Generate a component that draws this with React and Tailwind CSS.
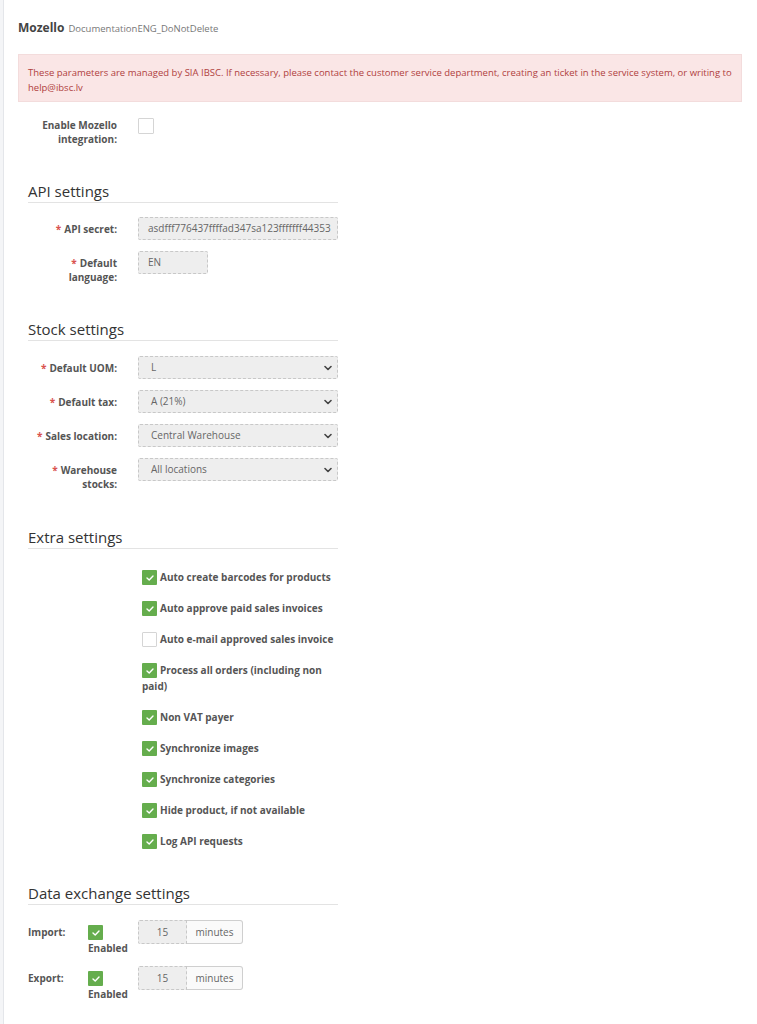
const font = { fontFamily: '"Open Sans", "Liberation Sans", sans-serif' }

const Req = () => <span className="text-[#d9534f] mr-[3px]">*</span>

const Label = ({ children, required }) => (
  <div className="w-[89px] pl-[4px] pt-[5px] text-right font-bold text-[10px] leading-[14px] text-[#555]">
    {required && <Req />}
    {children}
  </div>
)

const Chevron = () => (
  <svg width="8" height="6" viewBox="0 0 8 6" className="shrink-0">
    <polyline points="1,1.5 4,4.5 7,1.5" fill="none" stroke="#444" strokeWidth="1.6" strokeLinecap="round" strokeLinejoin="round" />
  </svg>
)

const Check = ({ size = 15, className = '' }) => (
  <span
    className={`flex items-center justify-center bg-[#65ad4d] rounded-[1px] ${className}`}
    style={{ width: size, height: size }}
  >
    <svg width="8" height="6" viewBox="0 0 8 6">
      <polyline points="1,3 3.2,5 7,1" fill="none" stroke="#fff" strokeWidth="1.4" strokeLinecap="round" strokeLinejoin="round" />
    </svg>
  </span>
)

const Empty = ({ size = 15, className = '' }) => (
  <span
    className={`block bg-white border border-[#d5d5d5] rounded-[1px] ${className}`}
    style={{ width: size, height: size }}
  />
)

const Heading = ({ children, className = '' }) => (
  <div className={`border-b border-[#e3e3e3] text-[15px] leading-[20px] pb-[1px] text-[#333] ${className}`}>
    {children}
  </div>
)

const TextRow = ({ label, value, width = 'w-[200px]' }) => (
  <div className="flex gap-[21px]">
    <Label required>{label}</Label>
    <div className={`${width} h-[23px] bg-[#eee] border border-dashed border-[#c8c8c8] rounded-[2px] pl-[9px] flex items-center text-[10px] text-[#666]`}>
      {value}
    </div>
  </div>
)

const SelectRow = ({ label, value }) => (
  <div className="flex gap-[21px]">
    <Label required>{label}</Label>
    <div className="w-[200px] h-[23px] bg-[#eee] border border-dashed border-[#c8c8c8] rounded-[2px] pl-[12px] pr-[5px] flex items-center justify-between text-[10px] text-[#666]">
      <span>{value}</span>
      <Chevron />
    </div>
  </div>
)

const extras = [
  ['Auto create barcodes for products', true],
  ['Auto approve paid sales invoices', true],
  ['Auto e-mail approved sales invoice', false],
  ['Process all orders (including non paid)', true],
  ['Non VAT payer', true],
  ['Synchronize images', true],
  ['Synchronize categories', true],
  ['Hide product, if not available', true],
  ['Log API requests', true],
]

const Exchange = ({ label }) => (
  <div className="flex">
    <div className="w-[60px] pt-[5px] font-bold text-[10px] leading-[14px] text-[#555]">{label}</div>
    <div className="w-[50px] pt-[5px]">
      <Check />
      <div className="font-bold text-[10px] leading-[14px] text-[#555] mt-[1px]">Enabled</div>
    </div>
    <div className="flex h-[24px] text-[10px] text-[#666]">
      <div className="w-[49px] bg-[#eee] border border-dashed border-[#c8c8c8] rounded-l-[2px] flex items-center justify-center">15</div>
      <div className="w-[56px] bg-[#fafafa] border border-l-0 border-[#cfcfcf] rounded-r-[3px] flex items-center justify-center">minutes</div>
    </div>
  </div>
)

export default function App() {
  return (
    <div className="flex min-h-[1024px] bg-white" style={font}>
      <div className="w-[4px] bg-[#f4f5f7] border-r border-[#e4e6ea]" />
      <div className="flex-1 pl-[14px] pr-[15px] pt-[20px] pb-[30px]">
        <div className="flex items-baseline gap-[4px] leading-[16px]">
          <span className="font-bold text-[12px] text-[#444]">Mozello</span>
          <span className="text-[9.5px] text-[#777]">DocumentationENG_DoNotDelete</span>
        </div>

        <div className="mt-[17px] bg-[#fae6e6] border border-[#f3dcdc] pl-[9px] pr-[8px] pt-[10px] pb-[6px] text-[9.5px] leading-[15px] text-[#b0413e]">
          These parameters are managed by SIA IBSC. If necessary, please contact the customer service department, creating an ticket in the service system, or writing to help@ibsc.lv
        </div>

        <div className="pl-[10px] w-[320px]">
          <div className="flex gap-[21px] mt-[16px]">
            <div className="w-[89px] pl-[4px] text-right font-bold text-[10px] leading-[14px] text-[#555]">
              Enable Mozello integration:
            </div>
            <Empty size={16} />
          </div>

          <Heading className="mt-[35px]">API settings</Heading>
          <div className="flex flex-col gap-[11px] mt-[14px]">
            <TextRow label="API secret:" value="asdfff776437ffffad347sa123fffffff44353" />
            <TextRow label="Default language:" value="EN" width="w-[70px]" />
          </div>

          <Heading className="mt-[35px]">Stock settings</Heading>
          <div className="flex flex-col gap-[11px] mt-[15px]">
            <SelectRow label="Default UOM:" value="L" />
            <SelectRow label="Default tax:" value="A (21%)" />
            <SelectRow label="Sales location:" value="Central Warehouse" />
            <SelectRow label="Warehouse stocks:" value="All locations" />
          </div>

          <Heading className="mt-[36px]">Extra settings</Heading>
          <div className="ml-[114px] w-[196px] mt-[20px] flex flex-col gap-[15px]">
            {extras.map(([text, on]) => (
              <div key={text} className="flow-root font-bold text-[10px] leading-[16px] text-[#555]">
                {on ? (
                  <Check className="float-left mt-[1px] mr-[3px]" />
                ) : (
                  <Empty className="float-left mt-[1px] mr-[3px]" />
                )}
                {text}
              </div>
            ))}
          </div>

          <Heading className="mt-[34px]">Data exchange settings</Heading>
          <div className="flex flex-col gap-[11px] mt-[15px]">
            <Exchange label="Import:" />
            <Exchange label="Export:" />
          </div>
        </div>
      </div>
    </div>
  )
}
